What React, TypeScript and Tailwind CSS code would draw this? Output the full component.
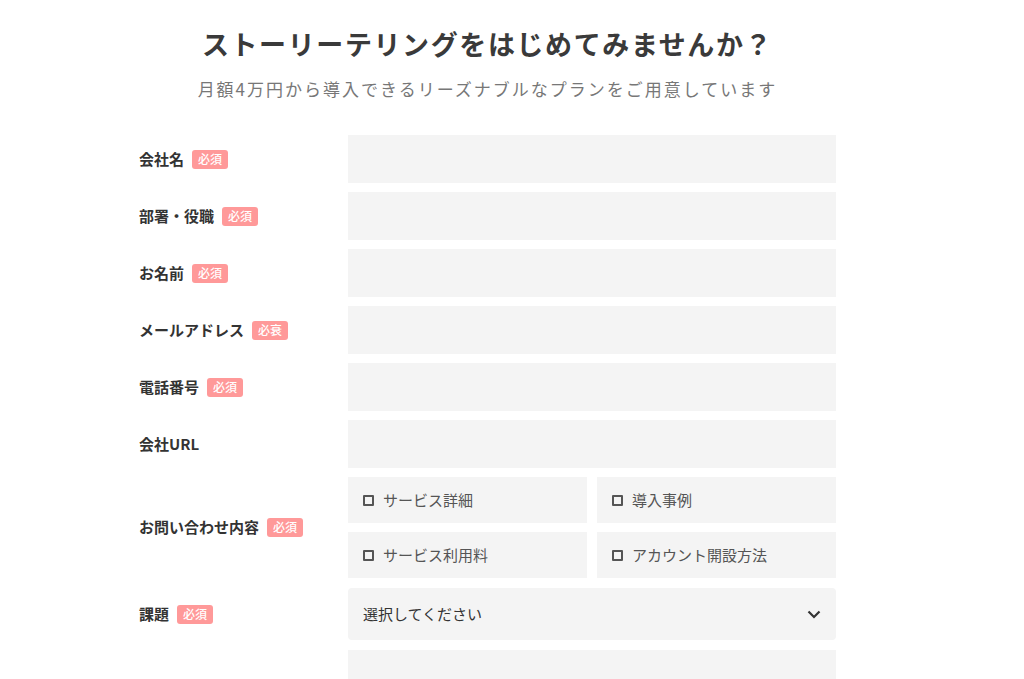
import React from "react";

const font = { fontFamily: '"Noto Sans CJK JP", "Noto Sans", sans-serif' };

function Badge({ text = "必須" }: { text?: string }) {
  return (
    <span className="ml-2 inline-flex h-[19px] items-center rounded-[3px] bg-[#ff9999] px-[6px] pb-[1px] text-[12px] font-medium leading-none text-white">
      {text}
    </span>
  );
}

function Row({ label, required = true, badge, children, tall }: { label: string; required?: boolean; badge?: string; children?: React.ReactNode; tall?: string }) {
  return (
    <div className="flex items-center">
      <div className="flex w-[209px] shrink-0 items-center">
        <span className="pb-[2px] text-[15px] font-bold leading-none text-[#333]">{label}</span>
        {required && <Badge text={badge} />}
      </div>
      <div className="flex-1">
        {children ?? <div className={`${tall ?? "h-[48px]"} w-full bg-[#f4f4f4]`} />}
      </div>
    </div>
  );
}

function Check({ label }: { label: string }) {
  return (
    <div className="flex h-[46px] items-center bg-[#f4f4f4] pl-[15px]">
      <span className="box-border h-[11px] w-[11px] rounded-[1px] border-2 border-[#555]" />
      <span className="ml-[9px] pb-[1px] text-[15px] leading-none text-[#555]">{label}</span>
    </div>
  );
}

export default function App() {
  return (
    <div className="min-h-[679px] bg-white" style={font}>
      <div className="ml-[139px] w-[697px]">
        <h1 className="pt-[25px] text-center text-[27px] font-bold leading-[38px] tracking-[1.6px] text-[#3a3a3a]">
          ストーリーテリングをはじめてみませんか？
        </h1>
        <p className="mt-[14px] text-center text-[17px] leading-[24px] tracking-[2px] text-[#777]">
          月額4万円から導入できるリーズナブルなプランをご用意しています
        </p>
        <div className="mt-[34px] flex flex-col gap-[9px]">
          <Row label="会社名" />
          <Row label="部署・役職" />
          <Row label="お名前" />
          <Row label="メールアドレス" badge="必衰" />
          <Row label="電話番号" />
          <Row label="会社URL" required={false} />
          <Row label="お問い合わせ内容">
            <div className="grid grid-cols-2 gap-x-[10px] gap-y-[9px]">
              <Check label="サービス詳細" />
              <Check label="導入事例" />
              <Check label="サービス利用料" />
              <Check label="アカウント開設方法" />
            </div>
          </Row>
          <div className="mt-[1px]">
            <Row label="課題">
              <div className="flex h-[52px] items-center justify-between rounded-[4px] bg-[#f4f4f4] pl-[15px] pr-[15px]">
                <span className="pb-[2px] text-[15px] leading-none text-[#333]">選択してください</span>
                <svg width="14" height="9" viewBox="0 0 14 9" fill="none">
                  <path d="M1.5 1.5 L7 7 L12.5 1.5" stroke="#333" strokeWidth="2.2" />
                </svg>
              </div>
            </Row>
          </div>
          <div className="mt-[1px] flex">
            <div className="w-[209px] shrink-0" />
            <div className="h-[48px] flex-1 bg-[#f4f4f4]" />
          </div>
        </div>
      </div>
    </div>
  );
}
